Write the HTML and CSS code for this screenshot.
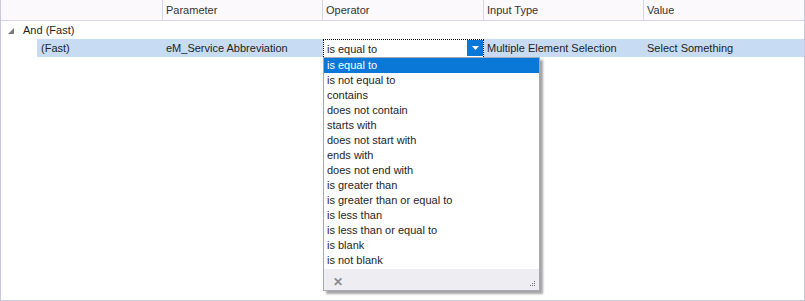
FILE: index.html
```html
<!DOCTYPE html>
<html lang="en">
<head>
  <meta charset="UTF-8">
  <title>Filter Editor</title>
  <link rel="stylesheet" href="styles.css">
</head>
<body>

<div class="grid">
  <div class="head">
    <div class="hcell"></div>
    <div class="hcell">Parameter</div>
    <div class="hcell">Operator</div>
    <div class="hcell">Input Type</div>
    <div class="hcell last">Value</div>
  </div>

  <!-- group row -->
  <div class="row group">
    <svg class="expander" width="6" height="6" viewBox="0 0 6 6"><polygon points="6,0 6,6 0,6" fill="#7a7a7a"/></svg>
    <span>And (Fast)</span>
  </div>

  <!-- condition row -->
  <div class="row cond">
    <div class="cell first">(Fast)</div>
    <div class="cell">eM_Service Abbreviation</div>
    <div class="cell editor-cell">
      <div class="editor">
        <span>is equal to</span>
        <div class="drop-btn">
          <svg width="7" height="4" viewBox="0 0 7 4"><polygon points="0,0 7,0 3.5,4" fill="#fff"/></svg>
        </div>
      </div>

      <div class="popup">
        <div class="item selected">is equal to</div>
        <div class="item">is not equal to</div>
        <div class="item">contains</div>
        <div class="item">does not contain</div>
        <div class="item">starts with</div>
        <div class="item">does not start with</div>
        <div class="item">ends with</div>
        <div class="item">does not end with</div>
        <div class="item">is greater than</div>
        <div class="item">is greater than or equal to</div>
        <div class="item">is less than</div>
        <div class="item">is less than or equal to</div>
        <div class="item">is blank</div>
        <div class="item">is not blank</div>
        <div class="popup-foot">
          <span class="clear">&#x2715;</span>
          <svg class="grip" width="6" height="6" viewBox="0 0 6 6">
            <rect x="4" y="0" width="1" height="1" fill="#707070"/>
            <rect x="2" y="2" width="1" height="1" fill="#707070"/>
            <rect x="4" y="2" width="1" height="1" fill="#707070"/>
            <rect x="0" y="4" width="1" height="1" fill="#707070"/>
            <rect x="2" y="4" width="1" height="1" fill="#707070"/>
            <rect x="4" y="4" width="1" height="1" fill="#707070"/>
          </svg>
        </div>
      </div>
    </div>
    <div class="cell">Multiple Element Selection</div>
    <div class="cell">Select Something</div>
  </div>
</div>

</body>
</html>
```

FILE: styles.css
```css
/* Base */
body {
  margin: 0;
  font-family: 'Liberation Sans', Arial, sans-serif;
  font-size: 11px;
  color: #1e1e1e;
  background: #ffffff;
}

.grid {
  position: relative;
  width: 805px;
  height: 301px;
  box-sizing: border-box;
  border: 1px solid #c9c9dd;
  border-top: none;
}

/* Header */
.head {
  display: grid;
  grid-template-columns: 162px 160px 161px 160px 1fr;
  height: 20px;
  background: #fbf9fb;
  border-bottom: 1px solid #d6d6e4;
}

.hcell {
  border-right: 1px solid #d6d6e4;
  padding-left: 3px;
  line-height: 20px;
  color: #333333;
}

.hcell.last {
  border-right: none;
}

/* Rows */
.row {
  height: 18px;
  line-height: 18px;
}

.group {
  display: flex;
  align-items: center;
}

.expander {
  margin: 0 9px 0 7px;
  position: relative;
  top: 1px;
}

.cond {
  display: grid;
  grid-template-columns: 162px 160px 161px 160px 1fr;
  background: linear-gradient(to right, #ffffff 36px, #c7dcf2 36px);
}

.cell {
  padding-left: 3px;
  white-space: nowrap;
}

.cell.first {
  padding-left: 40px;
}

.editor-cell {
  position: relative;
  padding-left: 0;
}

.editor {
  display: flex;
  justify-content: space-between;
  height: 18px;
  box-sizing: border-box;
  background: #ffffff;
  border: 1px dotted #000000;
  border-bottom: none;
  padding-left: 3px;
}

.drop-btn {
  width: 16px;
  height: 16px;
  background: #0a78d7;
  display: flex;
  align-items: center;
  justify-content: center;
}

/* Dropdown list */
.popup {
  position: absolute;
  top: 18px;
  left: 0;
  width: 217px;
  box-sizing: border-box;
  background: #ffffff;
  border: 1px solid #a8a8b4;
  box-shadow: 3px 3px 2px rgba(0, 0, 0, 0.35);
  z-index: 10;
}

.item {
  height: 15px;
  line-height: 15px;
  padding-left: 3px;
}

.item.selected {
  background: #0a78d7;
  color: #ffffff;
}

.popup-foot {
  position: relative;
  height: 21px;
  background: #eeeef2;
  margin-top: 1px;
}

.clear {
  position: absolute;
  left: 9px;
  top: 4px;
  font-size: 12px;
  font-weight: bold;
  color: #8a8a8a;
}

.grip {
  position: absolute;
  right: 3px;
  bottom: 3px;
}
```
